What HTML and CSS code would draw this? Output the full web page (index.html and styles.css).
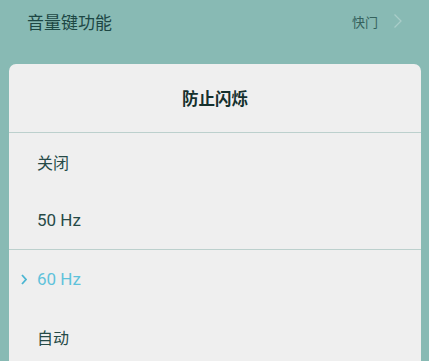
FILE: index.html
```html
<!DOCTYPE html>
<html lang="zh-CN">
<head>
<meta charset="utf-8">
<link rel="stylesheet" href="styles.css">
</head>
<body>
<div class="screen">
  <div class="setting-row">
    <span class="setting-label">音量键功能</span>
    <span class="setting-value">快门</span>
    <svg class="row-chevron" width="10" height="16" viewBox="0 0 10 16"><path d="M1.5 1.5 L8 8 L1.5 14.5" fill="none" stroke="#a9cdc8" stroke-width="1.3"/></svg>
  </div>
  <div class="dialog">
    <div class="dialog-title">防止闪烁</div>
    <div class="option"><span class="marker"></span><span class="opt-text">关闭</span></div>
    <div class="option"><span class="marker"></span><span class="opt-text latin">50 Hz</span></div>
    <div class="option selected divided"><span class="marker"><svg width="6" height="11" viewBox="0 0 6 11"><path d="M1 1 L5 5.5 L1 10" fill="none" stroke="#4bb6d2" stroke-width="1.8"/></svg></span><span class="opt-text latin">60 Hz</span></div>
    <div class="option"><span class="marker"></span><span class="opt-text">自动</span></div>
  </div>
</div>
</body>
</html>
```
FILE: styles.css
```css
html, body {
  margin: 0;
  padding: 0;
  background: #88bab4;
}
body {
  font-family: "Noto Sans CJK SC", "Noto Sans", sans-serif;
  width: 429px;
  height: 361px;
  overflow: hidden;
}
.screen {
  display: flex;
  flex-direction: column;
  height: 361px;
}
.setting-row {
  height: 42px;
  display: flex;
  align-items: center;
  padding: 0 26px 0 27px;
  flex-shrink: 0;
}
.setting-label {
  font-size: 17px;
  color: #1d4744;
  flex: 1;
  line-height: 1;
}
.setting-value {
  font-size: 13px;
  color: #35625d;
  margin-right: 15px;
}
.row-chevron {
  display: block;
}
.dialog {
  margin: 22px 8px 0 9px;
  background: #efefef;
  border-radius: 7px 7px 0 0;
  flex: 1;
  display: flex;
  flex-direction: column;
}
.dialog-title {
  height: 68px;
  display: flex;
  align-items: center;
  justify-content: center;
  font-size: 16.5px;
  font-weight: 700;
  color: #15302d;
  border-bottom: 1px solid #bcd0cd;
  flex-shrink: 0;
}
.option {
  height: 58px;
  display: flex;
  align-items: center;
  padding-left: 12px;
  flex-shrink: 0;
}
.option.divided {
  border-top: 1px solid #bcd0cd;
}
.marker {
  width: 16px;
  display: flex;
  align-items: center;
}
.marker svg {
  display: block;
}
.opt-text {
  font-size: 16px;
  color: #264a47;
}
.latin {
  font-family: "Roboto", "Noto Sans", sans-serif;
  font-size: 17px;
}
.selected .opt-text {
  color: #5ec2db;
}
```
